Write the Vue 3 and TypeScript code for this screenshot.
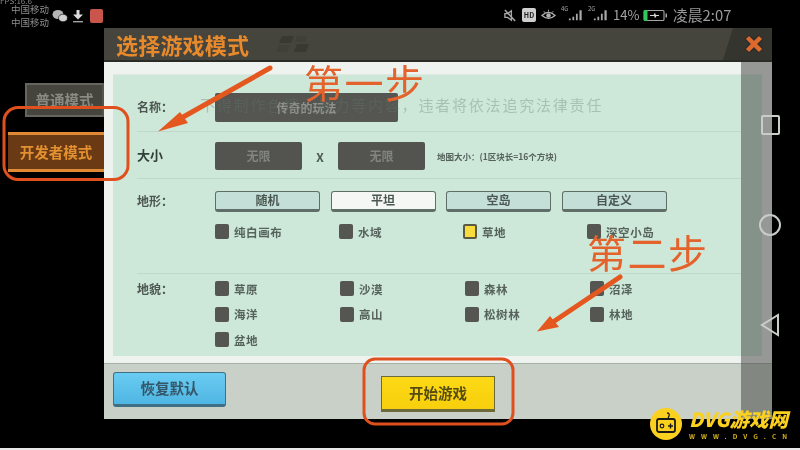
<template>
  <div class="screen">
    <!-- 状态栏 -->
    <div class="status-bar">
      <span class="fps">FPS:16.6</span>
      <div class="status-left">
        <div class="carriers">
          <span>中国移动</span>
          <span>中国移动</span>
        </div>
        <svg class="notify-icon" width="16" height="14" viewBox="0 0 16 14">
          <ellipse cx="6" cy="5.5" rx="5.5" ry="4.5" fill="#b5b5b5" />
          <ellipse cx="11" cy="9" rx="4.5" ry="3.8" fill="#d0d0d0" stroke="#000" stroke-width="0.6" />
        </svg>
        <svg class="notify-icon" width="12" height="14" viewBox="0 0 12 14">
          <path d="M4.5 1h3v4.5H11L6 10.5 1 5.5h3.5z" fill="#dcdcdc" />
          <rect x="1" y="12" width="10" height="1.4" fill="#a0a0a0" />
        </svg>
        <div class="red-app"></div>
      </div>
      <div class="status-right">
        <svg width="14" height="15" viewBox="0 0 15 15">
          <path d="M2 5.5h3l4-3v10l-4-3H2z" fill="none" stroke="#a8a8a8" stroke-width="1.4" />
          <path d="M2 1.5l11 12" stroke="#a8a8a8" stroke-width="1.6" />
        </svg>
        <div class="hd-badge">HD</div>
        <svg width="15" height="14" viewBox="0 0 16 14">
          <path d="M1 7.5Q8 1 15 7.5Q8 13.5 1 7.5z" fill="none" stroke="#b0b0b0" stroke-width="1.3" />
          <circle cx="8" cy="7.5" r="2.4" fill="#b0b0b0" />
          <path d="M3 3l1.4 1.6M8 1.4v2M13 3l-1.4 1.6" stroke="#b0b0b0" stroke-width="1" />
        </svg>
        <div v-for="net in networks" :key="net.name" class="signal" :style="{ width: net.width + 'px' }">
          <span class="net-type">{{ net.name }}</span>
          <svg width="15" height="14" viewBox="0 0 17 14">
            <path d="M1 13h2v-2H1zM5 13h2V9H5zM9 13h2V5.500H9zM13 13h2.500V1.500H13z" fill="#aaa" />
          </svg>
        </div>
        <span class="battery-text">14%</span>
        <svg width="25" height="13" viewBox="0 0 25 13">
          <rect x="1" y="1.500" width="20" height="10" rx="1" fill="none" stroke="#a5a5a5" stroke-width="1.100" />
          <rect x="1" y="1" width="3.500" height="11" fill="#34c45c" />
          <path d="M7 6.500h4l1-2v4l1-2h3" stroke="#d5d5d5" stroke-width="1.200" fill="none" />
          <rect x="22.500" y="4.500" width="1.500" height="4" fill="#a5a5a5" />
        </svg>
        <span class="clock">凌晨2:07</span>
      </div>
    </div>

    <div class="main">
      <!-- 左侧模式切换 -->
      <div class="side-tabs">
        <div class="tab tab-normal">普通模式</div>
        <div class="tab tab-dev">开发者模式</div>
      </div>

      <div class="game-window">
        <div class="win-header">
          <h1 class="win-title">选择游戏模式</h1>
          <svg class="header-decor" width="34" height="16" viewBox="0 0 34 16">
            <path d="M6 0h12l-3 7H3zM21 8h12l-3 8H18z" fill="#393931" />
            <path d="M21 0h10l-2 6H19zM3 9h11l-3 7H0z" fill="#40403a" />
          </svg>
          <div class="close-corner">
            <svg width="22" height="22" viewBox="0 0 22 22">
              <path d="M4 4l14 14M18 4L4 18" stroke="#2c2c28" stroke-width="7" />
              <path d="M4.500 4.500l13 13M17.500 4.500l-13 13" stroke="#dd6a2c" stroke-width="4.500" />
            </svg>
          </div>
        </div>

        <div class="panel-wrap">
          <div class="panel">
            <!-- 名称 -->
            <div class="row row-name">
              <div class="row-label">名称：</div>
              <div class="name-input">传奇的玩法</div>
              <div class="warn-text">不得制作色情、暴力等内容，违者将依法追究法律责任</div>
            </div>

            <!-- 大小 -->
            <div class="row row-size">
              <div class="row-label label-strong">大小</div>
              <div class="size-line">
                <div class="size-box">无限</div>
                <span class="size-x">X</span>
                <div class="size-box">无限</div>
                <span class="size-tip">地图大小：(1区块长=16个方块)</span>
              </div>
            </div>

            <!-- 地形 -->
            <div class="row row-terrain">
              <div class="row-label">地形：</div>
              <div>
                <div class="terrain-btns">
                  <div
                    v-for="t in terrains"
                    :key="t"
                    :class="['terrain-btn', { active: t === '平坦' }]"
                  >{{ t }}</div>
                </div>
                <div class="check-grid">
                  <div v-for="c in terrainTypes" :key="c" class="check-item">
                    <span :class="['check', { checked: c === '草地' }]"></span>
                    <span>{{ c }}</span>
                  </div>
                </div>
              </div>
            </div>

            <!-- 地貌 -->
            <div class="row row-land">
              <div class="row-label">地貌：</div>
              <div class="check-grid land-grid">
                <div v-for="c in landforms" :key="c" class="check-item">
                  <span class="check"></span>
                  <span>{{ c }}</span>
                </div>
              </div>
            </div>
          </div>
        </div>

        <div class="win-footer">
          <div class="btn-reset">恢复默认</div>
          <div class="btn-start">开始游戏</div>
        </div>

        <div class="side-shade"></div>
      </div>
    </div>

    <div class="bottom-line"></div>

    <!-- 教程标注 -->
    <svg class="annotations" width="800" height="450" viewBox="0 0 800 450">
      <g fill="none" stroke="#c9cdca" stroke-width="2">
        <rect x="762" y="116" width="17" height="18" rx="1" />
        <circle cx="770" cy="225" r="10" />
        <path d="M778 315v20l-16-10z" />
      </g>
      <g fill="none" stroke="#e0501f" stroke-width="3">
        <rect x="4" y="107.500" width="124" height="72" rx="14" />
        <rect x="364" y="359" width="149" height="65" rx="11" />
      </g>
      <path d="M270 68L176 121" stroke="#e4581f" stroke-width="5" stroke-linecap="round" />
      <path d="M158 131.500L180 112L188 123z" fill="#e4581f" />
      <path d="M620 277L553 322" stroke="#e4581f" stroke-width="5" stroke-linecap="round" />
      <path d="M537 331.500L550 316L559 327z" fill="#e4581f" />
    </svg>
    <div class="step step-one">第一步</div>
    <div class="step step-two">第二步</div>

    <!-- 水印 -->
    <div class="watermark">
      <svg width="32" height="32" viewBox="0 0 32 32">
        <circle cx="16" cy="16" r="16" fill="#fbd01e" />
        <path d="M17 5q3 0 2 3t-2 3" fill="none" stroke="#1a1a1a" stroke-width="1.300" />
        <rect x="7" y="11" width="18" height="13" rx="2" fill="none" stroke="#1a1a1a" stroke-width="1.800" />
        <circle cx="12" cy="18" r="1.800" fill="none" stroke="#1a1a1a" stroke-width="1.200" />
        <path d="M18 18h5M20.500 15.500v5" stroke="#1a1a1a" stroke-width="1.500" />
      </svg>
      <div class="mark-text">
        <div class="mark-name">DVG游戏网</div>
        <div class="mark-url">WWW.DVG.CN</div>
      </div>
    </div>
  </div>
</template>

<script setup lang="ts">
const networks: { name: string; width: number }[] = [
  { name: '4G', width: 22 },
  { name: '2G', width: 20 }
]
const terrains: string[] = ['随机', '平坦', '空岛', '自定义']
const terrainTypes: string[] = ['纯白画布', '水域', '草地', '深空小岛']
const landforms: string[] = ['草原', '沙漠', '森林', '沼泽', '海洋', '高山', '松树林', '林地', '盆地']
</script>

<style>
html,
body {
  margin: 0;
  background: #000;
}
</style>

<style scoped>
.screen {
  position: relative;
  width: 800px;
  height: 450px;
  overflow: hidden;
  background: #000;
  font-family: "Noto Sans CJK SC", "Liberation Sans", sans-serif;
  filter: blur(0.6px);
}

.status-bar {
  position: relative;
  height: 28px;
  display: flex;
  justify-content: space-between;
  align-items: center;
  padding: 0 69px 0 11px;
  color: #a8a8a8;
}

.fps {
  position: absolute;
  left: 0;
  top: -4px;
  font-size: 8px;
  line-height: 10px;
  color: #8a8a8a;
}

.status-left,
.status-right {
  display: flex;
  align-items: center;
}

.carriers {
  display: flex;
  flex-direction: column;
  font-size: 9.500px;
  line-height: 13px;
  color: #8e8e8e;
  margin-top: 3px;
}

.notify-icon {
  margin-left: 3px;
  margin-top: 3px;
}

.notify-icon + .notify-icon {
  margin-left: 4px;
}

.red-app {
  width: 13px;
  height: 14px;
  border-radius: 2px;
  background: #c9554c;
  margin-left: 6px;
  margin-top: 3px;
}

.status-right {
  gap: 5px;
  margin-top: 2px;
}

.hd-badge {
  width: 14px;
  height: 14px;
  border-radius: 2px;
  background: #cfcfcf;
  color: #222;
  font-size: 7px;
  font-weight: 700;
  line-height: 14px;
  text-align: center;
}

.signal {
  position: relative;
  display: flex;
  justify-content: flex-end;
}

.signal svg {
  display: block;
}

.net-type {
  position: absolute;
  left: 0;
  top: -3px;
  font-size: 6px;
  line-height: 8px;
  color: #a8a8a8;
}

.battery-text {
  width: 25px;
  font-size: 13px;
  line-height: 16px;
  color: #a5a5a5;
  white-space: nowrap;
}

.clock {
  width: 58px;
  font-size: 14.800px;
  line-height: 16px;
  color: #9d9d9d;
  white-space: nowrap;
}

.main {
  display: flex;
  height: 391px;
}

.side-tabs {
  width: 104px;
  display: flex;
  flex-direction: column;
  align-items: flex-end;
  padding-top: 55px;
  gap: 15px;
}

.tab {
  box-sizing: border-box;
  text-align: center;
  font-weight: 700;
  font-size: 14.500px;
}

.tab-normal {
  width: 79px;
  height: 34px;
  line-height: 30px;
  border: 2px solid #66665e;
  border-right-color: #55554e;
  background: #45453e;
  color: #8a8a82;
}

.tab-dev {
  width: 96px;
  height: 40px;
  line-height: 34px;
  background: #6a3a15;
  border-top: 3px solid #e08a35;
  border-bottom: 3px solid #e08a35;
  color: #e39030;
}

.game-window {
  position: relative;
  width: 668px;
  display: flex;
  flex-direction: column;
}

.win-header {
  position: relative;
  height: 34px;
  box-sizing: border-box;
  display: flex;
  align-items: center;
  padding-left: 12px;
  background: #46453d;
  border-bottom: 2px solid #2b2b26;
}

.win-title {
  margin: 0;
  font-size: 22px;
  line-height: 30px;
  font-weight: 700;
  letter-spacing: 0.200px;
  color: #e8892b;
}

.header-decor {
  margin-left: 27px;
}

.close-corner {
  position: absolute;
  right: 0;
  top: 0;
  width: 49px;
  height: 32px;
  background: #35352f;
  clip-path: polygon(10px 0, 100% 0, 100% 100%, 0 100%);
  display: flex;
  align-items: center;
  justify-content: flex-end;
  padding-right: 7px;
  box-sizing: border-box;
}

.panel-wrap {
  box-sizing: border-box;
  height: 301px;
  padding: 12px 10px 7px 9px;
  background: #eff3ef;
}

.panel {
  height: 100%;
  padding-left: 24px;
  padding-right: 21px;
  box-sizing: border-box;
  background: #cde7d8;
  color: #4e5a54;
  border-top: 1px solid #dfe9e2;
}

.row {
  position: relative;
  display: grid;
  grid-template-columns: 78px 1fr;
  box-sizing: border-box;
  border-bottom: 1px solid #bfd9c9;
}

.row-label {
  font-size: 12px;
  line-height: 16px;
  font-weight: 700;
  color: #4d5752;
}

.label-strong {
  color: #33403a;
  font-size: 13px;
}

.row-name {
  height: 57px;
  padding-top: 18px;
}

.row-name .row-label {
  margin-top: 6px;
}

.name-input {
  width: 183px;
  height: 29px;
  border-radius: 2px;
  background: #555652;
  color: #8f918c;
  font-size: 12px;
  font-weight: 700;
  line-height: 30px;
  text-align: center;
}

.warn-text {
  position: absolute;
  left: 63px;
  top: 19px;
  font-size: 15px;
  line-height: 22px;
  letter-spacing: 1.800px;
  white-space: nowrap;
  color: rgba(96, 120, 108, 0.34);
}

.row-size {
  height: 47px;
  padding-top: 10px;
}

.row-size .row-label {
  margin-top: 5px;
}

.size-line {
  display: flex;
  align-items: center;
  height: 28px;
}

.size-box {
  width: 87px;
  height: 28px;
  border-radius: 2px;
  background: #535450;
  color: #82847f;
  font-size: 12px;
  font-weight: 700;
  line-height: 28px;
  text-align: center;
}

.size-x {
  width: 36px;
  text-align: center;
  font-size: 12px;
  font-weight: 700;
  color: #4a5650;
}

.size-tip {
  margin-left: 12px;
  font-size: 8.500px;
  font-weight: 700;
  color: #56625c;
  white-space: nowrap;
}

.row-terrain {
  height: 95px;
  padding-top: 12px;
}

.row-terrain .row-label {
  margin-top: 2px;
}

.terrain-btns {
  display: flex;
  gap: 10.500px;
}

.terrain-btn {
  box-sizing: border-box;
  width: 105px;
  height: 21px;
  border: 1.500px solid #5f6e66;
  border-bottom-width: 3px;
  border-radius: 3px;
  background: #c4dfd8;
  color: #4b5751;
  font-size: 12px;
  font-weight: 700;
  line-height: 16px;
  text-align: center;
}

.terrain-btn.active {
  background: #f5f7f4;
}

.check-grid {
  display: grid;
  grid-template-columns: repeat(4, 124px);
  margin-top: 12px;
}

.land-grid {
  grid-template-columns: repeat(4, 125px);
  margin-top: 0;
  row-gap: 10.500px;
  padding-top: 7px;
}

.check-item {
  display: flex;
  align-items: center;
  gap: 5px;
  height: 15px;
  font-size: 11.500px;
  font-weight: 700;
  letter-spacing: 0.600px;
  color: #56635c;
  white-space: nowrap;
}

.check {
  width: 14px;
  height: 15px;
  box-sizing: border-box;
  border-radius: 2px;
  background: #555652;
}

.check.checked {
  background: #f7dc3c;
  border: 2px solid #5a5a42;
}

.row-land {
  border-bottom: none;
}

.row-land .row-label {
  margin-top: 7px;
}

.win-footer {
  flex: 1;
  display: flex;
  align-items: flex-start;
  padding: 8px 0 0 9px;
  background: #c9d0c8;
  border-top: 1px solid #a9b0a8;
  box-sizing: border-box;
}

.btn-reset {
  box-sizing: border-box;
  width: 113px;
  height: 35px;
  border: 1.500px solid #3f6f85;
  border-bottom-width: 3px;
  border-radius: 3px;
  background: linear-gradient(#6accf2, #4fb5e2);
  color: #345668;
  font-size: 14.500px;
  font-weight: 700;
  line-height: 30px;
  text-align: center;
}

.btn-start {
  box-sizing: border-box;
  width: 114px;
  height: 36px;
  margin: 4px 0 0 155px;
  border: 1.500px solid #6c6a3a;
  border-bottom-width: 3px;
  background: linear-gradient(#fcd916, #f8cf0c);
  color: #544c12;
  font-size: 14.500px;
  font-weight: 700;
  line-height: 31px;
  text-align: center;
}

.side-shade {
  position: absolute;
  right: 0;
  top: 34px;
  bottom: 0;
  width: 31px;
  background: rgba(60, 62, 60, 0.5);
}

.bottom-line {
  position: absolute;
  left: 0;
  right: 0;
  bottom: 0;
  height: 2px;
  background: #e8e8e8;
}

.annotations {
  position: absolute;
  left: 0;
  top: 0;
}

.step {
  position: absolute;
  font-size: 39px;
  line-height: 44px;
  font-weight: 400;
  letter-spacing: 1.500px;
  color: #e4622c;
  white-space: nowrap;
}

.step-one {
  left: 304px;
  top: 59px;
}

.step-two {
  left: 587px;
  top: 229px;
}

.watermark {
  position: absolute;
  left: 650px;
  top: 408px;
  display: flex;
  gap: 7px;
}

.mark-text {
  display: flex;
  flex-direction: column;
}

.mark-name {
  font-size: 19.500px;
  line-height: 22px;
  font-weight: 900;
  font-style: italic;
  color: #fbd01e;
  white-space: nowrap;
}

.mark-url {
  font-size: 6.500px;
  line-height: 10px;
  margin-top: 1px;
  letter-spacing: 6px;
  font-weight: 700;
  color: #d8b420;
  white-space: nowrap;
}
</style>
